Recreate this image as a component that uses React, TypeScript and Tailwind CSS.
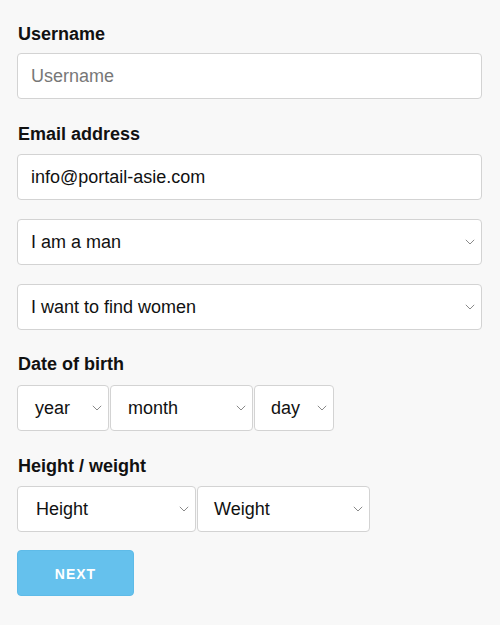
import { ReactNode } from "react";

function Chevron() {
    return (
        <svg width="10" height="6" viewBox="0 0 10 6" className="absolute right-[6px] top-1/2 -translate-y-1/2" fill="none">
            <path d="M0.8 0.8 L5 5 L9.2 0.8" stroke="#8a8a8a" strokeWidth="1" />
        </svg>
    );
}

function Select({ label, className, pad = "pl-[13px]" }: { label: string; className: string; pad?: string }) {
    return (
        <div className={`relative h-[46px] bg-white border border-[#d3d3d3] rounded-[4px] flex items-center pt-[1px] text-[18px] text-[#111] ${pad} ${className}`}>
            <span>{label}</span>
            <Chevron />
        </div>
    );
}

function Label({ children, className }: { children: ReactNode; className: string }) {
    return <div className={`text-[18px] leading-[20px] font-bold text-[#111] ${className}`}>{children}</div>;
}

export default function App() {
    return (
        <div className="min-h-screen bg-[#f8f8f8] px-[17px] pt-[24px]" style={{ fontFamily: '"Liberation Sans", Arial, sans-serif' }}>
            <Label className="mb-[9px] pl-[1px]">Username</Label>
            <div className="h-[46px] w-[465px] bg-white border border-[#d3d3d3] rounded-[4px] flex items-center pt-[1px] pl-[13px] text-[18px] text-[#777]">
                Username
            </div>

            <Label className="mt-[25px] mb-[10px] pl-[1px]">Email address</Label>
            <div className="h-[46px] w-[465px] bg-white border border-[#d3d3d3] rounded-[4px] flex items-center pt-[1px] pl-[13px] text-[18px] text-[#111]">
                info@portail-asie.com
            </div>

            <Select label="I am a man" className="w-[465px] mt-[19px]" />
            <Select label="I want to find women" className="w-[465px] mt-[19px]" />

            <Label className="mt-[24px] mb-[11px] pl-[1px]">Date of birth</Label>
            <div className="flex gap-[1px]">
                <Select label="year" className="w-[92px]" pad="pl-[17px]" />
                <Select label="month" className="w-[143px]" pad="pl-[17px]" />
                <Select label="day" className="w-[80px]" pad="pl-[16px]" />
            </div>

            <Label className="mt-[25px] mb-[10px] pl-[1px]">Height / weight</Label>
            <div className="flex gap-[1px]">
                <Select label="Height" className="w-[179px]" pad="pl-[18px]" />
                <Select label="Weight" className="w-[173px]" pad="pl-[16px]" />
            </div>

            <button className="mt-[18px] w-[117px] h-[46px] rounded-[4px] bg-[#65c1ed] border border-[#5ebbe8] text-white font-bold text-[14px] tracking-[1px] flex items-center justify-center pt-[2px]">
                NEXT
            </button>
        </div>
    );
}
